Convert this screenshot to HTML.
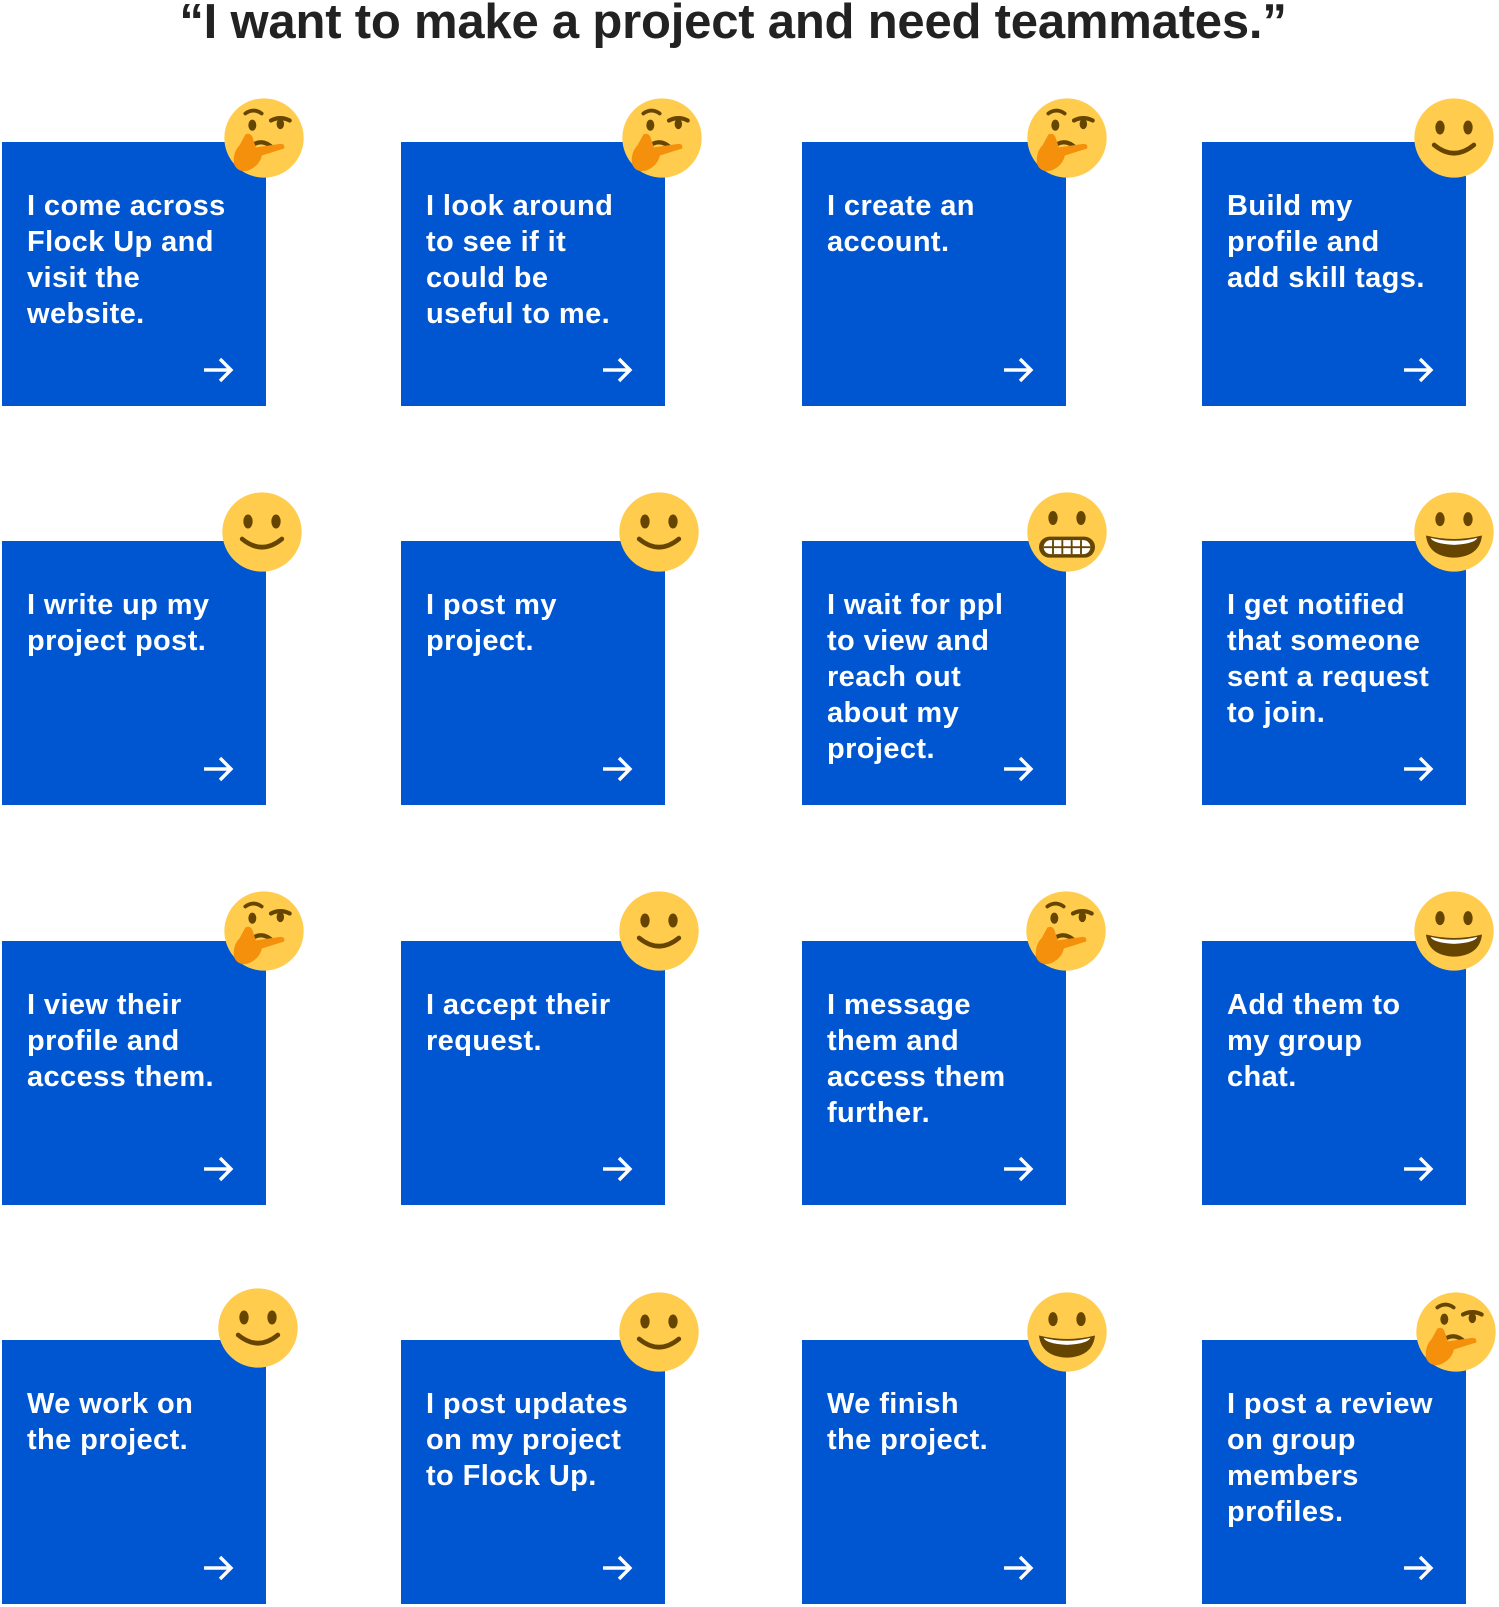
<!DOCTYPE html>
<html><head><meta charset="utf-8">
<style>
html,body{margin:0;padding:0;background:#fff;}
body{width:1499px;height:1607px;position:relative;overflow:hidden;font-family:"Liberation Sans",sans-serif;}
h1{position:absolute;left:0;width:1466px;top:-7px;margin:0;text-align:center;font-size:49px;font-weight:bold;color:#222;letter-spacing:-0.2px;line-height:58px;}
.card{position:absolute;width:264px;height:264px;background:#0055D0;}
.card .t{position:absolute;left:25px;top:46px;color:#fff;font-weight:bold;font-size:29px;line-height:36px;letter-spacing:0.4px;}
.card svg.ar{position:absolute;left:200px;top:214px;}
.emo{position:absolute;width:84px;height:84px;}
</style></head><body>
<svg width="0" height="0" style="position:absolute">
<defs>
<g id="think">
<circle cx="18" cy="18" r="17" fill="#FFCC4D"/>
<path d="M10 7.5 q3.5-2.5 7 0" stroke="#664500" stroke-width="1.6" fill="none" stroke-linecap="round"/>
<path d="M21 10.5 q4-2 8 0" stroke="#664500" stroke-width="1.8" fill="none" stroke-linecap="round"/>
<ellipse cx="13" cy="12.5" rx="1.7" ry="2.4" fill="#664500"/>
<ellipse cx="25" cy="12" rx="1.6" ry="2.2" fill="#664500"/>
<path d="M14 20.5 q4-2 8 2" stroke="#664500" stroke-width="1.8" fill="none" stroke-linecap="round"/>
<path d="M10 16.5 q2-1 3 1 l1.5 4.5 l10.5 -1.5 q2.2 0 1.6 2 l-9.5 3 q-1 4.5 -6 6.5 q-4.5 1 -6-3 q-0.5-5 2.5-8 z" fill="#F4900C"/>
</g>
<g id="smile">
<circle cx="18" cy="18" r="17" fill="#FFCC4D"/>
<ellipse cx="12" cy="13.5" rx="2" ry="3" fill="#664500"/>
<ellipse cx="24" cy="13.5" rx="2" ry="3" fill="#664500"/>
<path d="M9.5 21 q8.5 7 17 0" stroke="#664500" stroke-width="2" fill="none" stroke-linecap="round"/>
</g>
<g id="grimace">
<circle cx="18" cy="18" r="17" fill="#FFCC4D"/>
<ellipse cx="12" cy="12" rx="2" ry="3" fill="#664500"/>
<ellipse cx="24" cy="12" rx="2" ry="3" fill="#664500"/>
<rect x="6" y="20" width="24" height="9" rx="4.5" fill="#664500"/>
<rect x="8" y="21.5" width="20" height="6" rx="3" fill="#fff"/>
<path d="M12 21.5v6M16 21.5v6M20 21.5v6M24 21.5v6M8 24.5h20" stroke="#664500" stroke-width="0.8"/>
</g>
<g id="grin">
<circle cx="18" cy="18" r="17" fill="#FFCC4D"/>
<ellipse cx="12" cy="12.5" rx="2" ry="3" fill="#664500"/>
<ellipse cx="24" cy="12.5" rx="2" ry="3" fill="#664500"/>
<path d="M6 19.5 q12 3 24 0 q-1 9 -12 9.5 q-11-0.5 -12-9.5z" fill="#664500"/>
<path d="M8 20.5 q10 2.5 20 0 q-1 2.5 -10 3 q-9-0.5 -10-3z" fill="#fff"/>
</g>
<g id="arrow"><path d="M2 14h27M18 3l11 11-11 11" stroke="#fff" stroke-width="3.4" fill="none"/></g>
</defs>
</svg>

<h1>“I want to make a project and need teammates.”</h1>

<div class="card" style="left:2px;top:142px"><div class="t">I come across<br>Flock Up and<br>visit the<br>website.</div><svg class="ar" width="34" height="28"><use href="#arrow"/></svg></div>
<div class="card" style="left:401px;top:142px"><div class="t">I look around<br>to see if it<br>could be<br>useful to me.</div><svg class="ar" width="34" height="28"><use href="#arrow"/></svg></div>
<div class="card" style="left:802px;top:142px"><div class="t">I create an<br>account.</div><svg class="ar" width="34" height="28"><use href="#arrow"/></svg></div>
<div class="card" style="left:1202px;top:142px"><div class="t">Build my<br>profile and<br>add skill tags.</div><svg class="ar" width="34" height="28"><use href="#arrow"/></svg></div>

<div class="card" style="left:2px;top:541px"><div class="t">I write up my<br>project post.</div><svg class="ar" width="34" height="28"><use href="#arrow"/></svg></div>
<div class="card" style="left:401px;top:541px"><div class="t">I post my<br>project.</div><svg class="ar" width="34" height="28"><use href="#arrow"/></svg></div>
<div class="card" style="left:802px;top:541px"><div class="t">I wait for ppl<br>to view and<br>reach out<br>about my<br>project.</div><svg class="ar" width="34" height="28"><use href="#arrow"/></svg></div>
<div class="card" style="left:1202px;top:541px"><div class="t">I get notified<br>that someone<br>sent a request<br>to join.</div><svg class="ar" width="34" height="28"><use href="#arrow"/></svg></div>

<div class="card" style="left:2px;top:941px"><div class="t">I view their<br>profile and<br>access them.</div><svg class="ar" width="34" height="28"><use href="#arrow"/></svg></div>
<div class="card" style="left:401px;top:941px"><div class="t">I accept their<br>request.</div><svg class="ar" width="34" height="28"><use href="#arrow"/></svg></div>
<div class="card" style="left:802px;top:941px"><div class="t">I message<br>them and<br>access them<br>further.</div><svg class="ar" width="34" height="28"><use href="#arrow"/></svg></div>
<div class="card" style="left:1202px;top:941px"><div class="t">Add them to<br>my group<br>chat.</div><svg class="ar" width="34" height="28"><use href="#arrow"/></svg></div>

<div class="card" style="left:2px;top:1340px"><div class="t">We work on<br>the project.</div><svg class="ar" width="34" height="28"><use href="#arrow"/></svg></div>
<div class="card" style="left:401px;top:1340px"><div class="t">I post updates<br>on my project<br>to Flock Up.</div><svg class="ar" width="34" height="28"><use href="#arrow"/></svg></div>
<div class="card" style="left:802px;top:1340px"><div class="t">We finish<br>the project.</div><svg class="ar" width="34" height="28"><use href="#arrow"/></svg></div>
<div class="card" style="left:1202px;top:1340px"><div class="t">I post a review<br>on group<br>members<br>profiles.</div><svg class="ar" width="34" height="28"><use href="#arrow"/></svg></div>

<svg class="emo" viewBox="0 0 36 36" style="left:222px;top:96px"><use href="#think"/></svg>
<svg class="emo" viewBox="0 0 36 36" style="left:620px;top:96px"><use href="#think"/></svg>
<svg class="emo" viewBox="0 0 36 36" style="left:1025px;top:96px"><use href="#think"/></svg>
<svg class="emo" viewBox="0 0 36 36" style="left:1412px;top:96px"><use href="#smile"/></svg>

<svg class="emo" viewBox="0 0 36 36" style="left:220px;top:490px"><use href="#smile"/></svg>
<svg class="emo" viewBox="0 0 36 36" style="left:617px;top:490px"><use href="#smile"/></svg>
<svg class="emo" viewBox="0 0 36 36" style="left:1025px;top:490px"><use href="#grimace"/></svg>
<svg class="emo" viewBox="0 0 36 36" style="left:1412px;top:490px"><use href="#grin"/></svg>

<svg class="emo" viewBox="0 0 36 36" style="left:222px;top:889px"><use href="#think"/></svg>
<svg class="emo" viewBox="0 0 36 36" style="left:617px;top:889px"><use href="#smile"/></svg>
<svg class="emo" viewBox="0 0 36 36" style="left:1024px;top:889px"><use href="#think"/></svg>
<svg class="emo" viewBox="0 0 36 36" style="left:1412px;top:889px"><use href="#grin"/></svg>

<svg class="emo" viewBox="0 0 36 36" style="left:216px;top:1286px"><use href="#smile"/></svg>
<svg class="emo" viewBox="0 0 36 36" style="left:617px;top:1290px"><use href="#smile"/></svg>
<svg class="emo" viewBox="0 0 36 36" style="left:1025px;top:1290px"><use href="#grin"/></svg>
<svg class="emo" viewBox="0 0 36 36" style="left:1414px;top:1290px"><use href="#think"/></svg>
</body></html>
